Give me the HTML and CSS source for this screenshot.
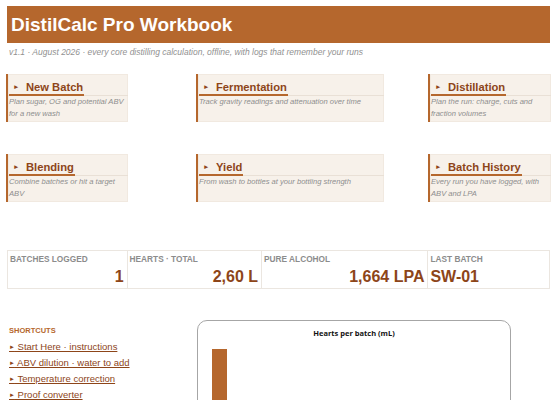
FILE: index.html
```html
<!DOCTYPE html>
<html>
<head>
<meta charset="utf-8">
<link rel="stylesheet" href="styles.css">
</head>
<body>
<div class="sheet">
  <header class="banner"><h1>DistilCalc Pro Workbook</h1></header>
  <p class="tagline">v1.1 · August 2026 · every core distilling calculation, offline, with logs that remember your runs</p>

  <div class="cards row1">
    <div class="card c1">
      <div class="card-head"><a><span class="tri">►</span>New Batch</a></div>
      <div class="card-desc">Plan sugar, OG and potential ABV for a new wash</div>
    </div>
    <div class="card c2">
      <div class="card-head"><a><span class="tri">►</span>Fermentation</a></div>
      <div class="card-desc">Track gravity readings and attenuation over time</div>
    </div>
    <div class="card c3">
      <div class="card-head"><a><span class="tri">►</span>Distillation</a></div>
      <div class="card-desc">Plan the run: charge, cuts and fraction volumes</div>
    </div>
  </div>

  <div class="cards row2">
    <div class="card c1">
      <div class="card-head"><a><span class="tri">►</span>Blending</a></div>
      <div class="card-desc">Combine batches or hit a target ABV</div>
    </div>
    <div class="card c2">
      <div class="card-head"><a><span class="tri">►</span>Yield</a></div>
      <div class="card-desc">From wash to bottles at your bottling strength</div>
    </div>
    <div class="card c3">
      <div class="card-head"><a><span class="tri">►</span>Batch History</a></div>
      <div class="card-desc">Every run you have logged, with ABV and LPA</div>
    </div>
  </div>

  <div class="stats">
    <div class="stat s1"><div class="stat-label">BATCHES LOGGED</div><div class="stat-val">1</div></div>
    <div class="stat s2"><div class="stat-label">HEARTS · TOTAL</div><div class="stat-val">2,60 L</div></div>
    <div class="stat s3"><div class="stat-label">PURE ALCOHOL</div><div class="stat-val">1,664 LPA</div></div>
    <div class="stat s4"><div class="stat-label">LAST BATCH</div><div class="stat-val left">SW-01</div></div>
  </div>

  <div class="bottom">
    <div class="shortcuts">
      <div class="sc-title">SHORTCUTS</div>
      <a class="sc-link"><span class="tri-s">►</span> Start Here · instructions</a>
      <a class="sc-link"><span class="tri-s">►</span> ABV dilution · water to add</a>
      <a class="sc-link"><span class="tri-s">►</span> Temperature correction</a>
      <a class="sc-link"><span class="tri-s">►</span> Proof converter</a>
    </div>
    <div class="chart">
      <div class="chart-title">Hearts per batch (mL)</div>
      <div class="plot"><div class="bar"></div></div>
    </div>
  </div>
</div>
</body>
</html>
```
FILE: styles.css
```css
html, body { margin: 0; padding: 0; background: #fff; }
body { font-family: "Liberation Sans", Arial, sans-serif; width: 560px; height: 400px; overflow: hidden; }
.sheet { padding: 6px 0 0 7px; height: 394px; overflow: hidden; }

.banner { width: 543px; height: 37px; background: #b5672d; display: flex; align-items: center; box-sizing: border-box; padding-left: 4px; }
.banner h1 { margin: 0; font-size: 19px; font-weight: bold; color: #fff; }

.tagline { margin: 3px 0 0 2px; font-size: 8.5px; font-style: italic; color: #919191; height: 12px; line-height: 12px; }

.cards { display: flex; margin-left: -1px; }
.row1 { margin-top: 16px; }
.row2 { margin-top: 32px; }

.card { height: 48px; background: #f7f1ea; border-left: 2px solid #b5672d; box-sizing: border-box; box-shadow: inset 0 0 0 1px #f1e9e0; }
.c1 { width: 122px; }
.c2 { width: 188px; margin-left: 68px; }
.c3 { width: 123px; margin-left: 44px; }

.card-head { height: 22px; box-sizing: border-box; border-bottom: 1px solid #e9e0d6; padding: 3px 0 0 1px; }
.card-head a { display: inline-block; color: #8d4519; font-weight: bold; font-size: 11.2px; line-height: 14px; white-space: nowrap; border-bottom: 2px solid #b5672d; padding-right: 1px; }
.tri { font-size: 6.5px; display: inline-block; width: 17px; padding-left: 4px; box-sizing: border-box; vertical-align: 2px; }

.card-desc { padding: 0 4px 0 1px; font-size: 7.6px; font-style: italic; color: #8e8e8e; line-height: 12px; }

.stats { display: flex; margin-top: 48px; width: 543px; height: 39px; border: 1px solid #ebe6e0; box-sizing: border-box; }
.stat { border-right: 1px solid #ebe6e0; box-sizing: border-box; padding: 3px 3px 0 2px; }
.stat:last-child { border-right: none; }
.s1 { width: 120px; }
.s2 { width: 135px; }
.s3 { width: 167px; }
.s4 { width: 121px; }
.stat-label { font-size: 8.3px; font-weight: bold; color: #8c8c8c; line-height: 10px; }
.stat-val { font-size: 16px; font-weight: bold; color: #8d4519; text-align: right; line-height: 20px; margin-top: 3px; }
.stat-val.left { text-align: left; }

.bottom { display: flex; margin-top: 31px; }
.shortcuts { width: 188px; padding: 6px 0 0 2px; display: flex; flex-direction: column; align-items: flex-start; }
.sc-title { font-size: 7.5px; font-weight: bold; color: #b5672d; line-height: 10px; margin-bottom: 3px; }
.sc-link { font-size: 9.5px; color: #8d4519; text-decoration: underline; line-height: 16px; white-space: nowrap; }
.tri-s { font-size: 6px; vertical-align: 1px; }

.chart { width: 314px; height: 120px; border: 1px solid #a6a6a6; border-radius: 10px; box-sizing: border-box; }
.chart-title { text-align: center; font-family: "Open Sans", "Liberation Sans", sans-serif; font-weight: bold; font-size: 7.5px; color: #111; margin-top: 6px; line-height: 12px; }
.plot { padding: 10px 0 0 14px; }
.bar { width: 15px; height: 80px; background: #b5672d; }
```
